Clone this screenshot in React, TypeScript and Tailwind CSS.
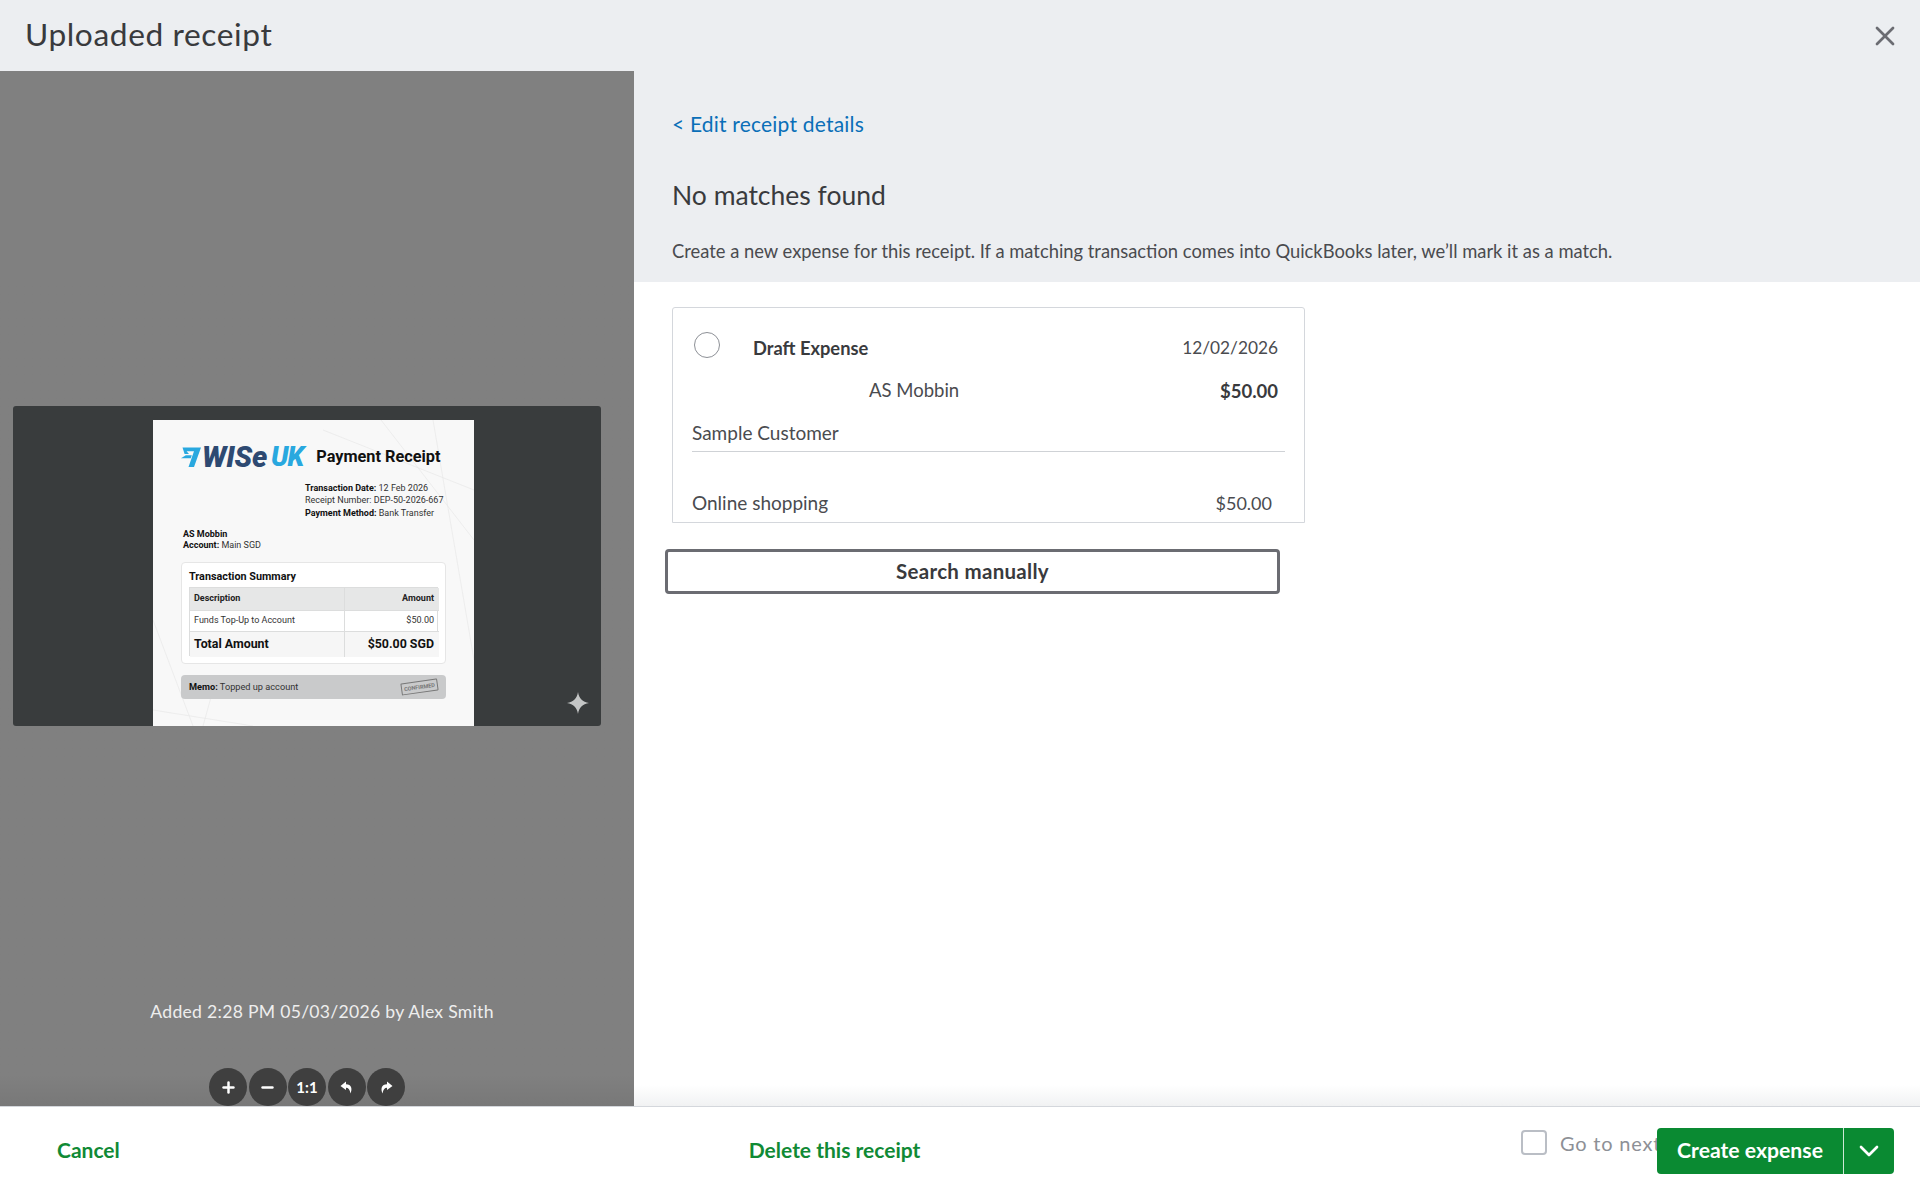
import { Plus, Minus, X, ChevronDown } from 'lucide-react';

const avenir = "font-['Lato','Noto_Sans',sans-serif]";

const ZoomBtn = ({ children }: { children: React.ReactNode }) => (
  <button className="flex h-[38px] w-[38px] shrink-0 items-center justify-center rounded-full bg-[#3f3f3f] text-white">
    {children}
  </button>
);

// filled curved arrow used by the rotate buttons
const TurnArrow = ({ flip }: { flip?: boolean }) => (
  <svg className={`h-[13px] w-[13px] ${flip ? '-scale-x-100' : ''}`} viewBox="0 0 13 13" fill="currentColor">
    <path d="M6 0.5L0.5 5L6 9V6.8C8.4 6.8 10 8.6 10.4 12.5C12.6 8 11.6 3.2 6 3.2Z" />
  </svg>
);

const PaperLines = () => (
  <svg className="absolute inset-0 h-full w-full" viewBox="0 0 321 306" fill="none" stroke="#e8e8e8" strokeWidth="0.7">
    <path d="M228 0L321 120M280 0L321 240M170 10L321 70" />
    <path d="M0 200L40 306M0 290L100 306M50 306L60 270" />
  </svg>
);

const Receipt = () => (
  <div className="relative ml-[13px] h-[306px] w-[321px] shrink-0 overflow-hidden bg-[#f8f8f8] font-['Roboto',sans-serif] text-[#1c1c1c]">
    <PaperLines />
    <div className="relative px-[28px] pt-[27px]">
      {/* Logo + title */}
      <div className="flex h-[20px] items-center">
        <svg className="h-[20px] w-[20px] shrink-0" viewBox="0 0 20 20" fill="#29a8df">
          <path d="M1.5 0.5H20L13 20H7.5L13 4.2H5.6L8 7H3.6Z" />
          <path d="M4.8 8.2H10.8L9.8 11.2H0Z" />
        </svg>
        <span className="ml-[1px] text-[29px] leading-[20px] font-black italic tracking-[-0.2px] text-[#2e4a72]">WISe</span>
        <span className="ml-[4px] text-[27px] leading-[20px] font-black italic tracking-[-1px] text-[#29a8df]">UK</span>
        <span className="ml-[13px] text-[16.3px] leading-[20px] font-bold text-[#111]">Payment Receipt</span>
      </div>
      <div className="mt-[15px] ml-[124px] text-[9px] leading-[12.4px] whitespace-nowrap text-[#333]">
        <p><b className="font-bold text-[#111]">Transaction Date:</b> 12 Feb 2026</p>
        <p>Receipt Number: DEP-50-2026-667</p>
        <p><b className="font-bold text-[#111]">Payment Method:</b> Bank Transfer</p>
      </div>
      <div className="mt-[10px] ml-[2px] text-[9px] leading-[11px] text-[#333]">
        <p className="font-bold text-[#111]">AS Mobbin</p>
        <p><b className="font-bold text-[#111]">Account:</b> Main SGD</p>
      </div>
      {/* Summary */}
      <div className="mt-[11px] h-[102px] w-[265px] rounded-[4px] border border-[#e6e6e6] bg-white px-[7px] pt-[7px]">
        <p className="text-[10.8px] leading-[14px] font-bold text-[#111]">Transaction Summary</p>
        <div className="mt-[3px] grid h-[69px] w-[249px] grid-cols-[155px_94px] grid-rows-[22px_21px_26px] border border-[#dcdddd] text-[9px]">
          <div className="flex items-center border-r border-[#dcdddd] bg-[#e6e7e7] px-[4px] font-bold text-[#222]">Description</div>
          <div className="flex items-center justify-end bg-[#e6e7e7] pr-[5px] font-bold text-[#222]">Amount</div>
          <div className="flex items-center border-t border-r border-[#dcdddd] px-[4px] text-[#333]">Funds Top-Up to Account</div>
          <div className="flex items-center justify-end border-t border-[#dcdddd] pr-[5px] text-[#333]">$50.00</div>
          <div className="flex items-center border-t border-r border-[#dcdddd] bg-[#f6f6f6] px-[4px] text-[12.4px] font-bold text-[#111]">Total Amount</div>
          <div className="flex items-center justify-end border-t border-[#dcdddd] bg-[#f6f6f6] pr-[5px] text-[12.4px] font-bold text-[#111]">$50.00 SGD</div>
        </div>
      </div>
      {/* Memo */}
      <div className="mt-[11px] flex h-[24px] w-[265px] items-center justify-between rounded-[4px] bg-[#c9cacb] px-[8px] text-[9.2px] text-[#333]">
        <p><b className="font-bold text-[#111]">Memo:</b> Topped up account</p>
        <span className="-rotate-[8deg] rounded-[1px] border border-[#777] px-[2px] text-[5.5px] leading-[10px] font-bold text-[#777]">CONFIRMED</span>
      </div>
    </div>
  </div>
);

export default function App() {
  return (
    <div className={`flex h-[1200px] w-[1920px] flex-col overflow-hidden bg-white text-[#393a3d] ${avenir}`}>
      {/* Header */}
      <header className="flex h-[71px] shrink-0 items-center justify-between bg-[#eceef1] pr-[19px] pl-[25px]">
        <h1 className="pb-[2px] text-[31.7px] tracking-[0.6px] text-[#393a3d]">Uploaded receipt</h1>
        <X className="h-[32px] w-[32px] text-[#6b6c72]" strokeWidth={2} />
      </header>

      <div className="flex min-h-0 flex-1">
        {/* Receipt viewer */}
        <aside className="flex w-[634px] shrink-0 flex-col items-center overflow-hidden bg-[#808080] bg-gradient-to-b from-[#808080] from-[97%] to-[#787878]">
          <div className="relative mt-[335px] mr-[20px] flex h-[320px] w-[588px] shrink-0 items-end justify-center rounded-[3px] bg-[#393c3d]">
            <Receipt />
            <svg className="absolute right-[12px] bottom-[12px] h-[22px] w-[22px]" viewBox="0 0 24 24" fill="#c4c6c6">
              <path d="M12 0C13 7 17 11 24 12C17 13 13 17 12 24C11 17 7 13 0 12C7 11 11 7 12 0Z" />
            </svg>
          </div>
          <p className="mt-[274px] ml-[10px] text-[17.6px] leading-[24px] tracking-[0.28px] text-[#eeeeee]">
            Added 2:28 PM 05/03/2026 by Alex Smith
          </p>
          <div className="mt-[44px] mr-[20px] flex gap-[1.5px]">
            <ZoomBtn><Plus className="h-[17px] w-[17px]" strokeWidth={3.5} /></ZoomBtn>
            <ZoomBtn><Minus className="h-[17px] w-[17px]" strokeWidth={3.5} /></ZoomBtn>
            <ZoomBtn><span className="text-[15px] font-bold">1:1</span></ZoomBtn>
            <ZoomBtn><TurnArrow /></ZoomBtn>
            <ZoomBtn><TurnArrow flip /></ZoomBtn>
          </div>
        </aside>

        {/* Right side */}
        <main className="flex min-w-0 flex-1 flex-col bg-white">
          <section className="h-[211px] shrink-0 bg-[#eceef1] pt-[40px] pl-[38px]">
            <a className="block text-[21px] leading-[26px] tracking-[0.2px] text-[#0a6fb8]">&lt; Edit receipt details</a>
            <h2 className="mt-[41px] text-[26.5px] leading-[34px] text-[#393a3d]">No matches found</h2>
            <p className="mt-[27px] text-[18.36px] leading-[24px] text-[#4a4b4f]">
              Create a new expense for this receipt. If a matching transaction comes into QuickBooks later, we’ll mark it as a match.
            </p>
          </section>

          <div className="flex-1 pt-[25px] pl-[38px]">
            {/* Draft card */}
            <div className="h-[216px] w-[633px] rounded-t-[3px] border border-[#d4d7dc] px-[19px] pt-[24px] text-[18px] leading-[24px]">
              <div className="flex items-start justify-between pr-[7px]">
                <div className="flex items-start">
                  <span className="ml-[2px] h-[26px] w-[26px] rounded-full border border-[#8d9096] bg-white" />
                  <span className="ml-[33px] pt-[4px] text-[18.3px] font-bold text-[#393a3d]">Draft Expense</span>
                </div>
                <span className="pt-[4px] text-[17.3px] text-[#4a4b4f]">12/02/2026</span>
              </div>
              <div className="mt-[18px] flex justify-between pr-[7px] pl-[177px] text-[#4a4b4f]">
                <span className="text-[18.5px]">AS Mobbin</span>
                <span className="pt-[1px] text-[18.5px] font-bold text-[#393a3d]">$50.00</span>
              </div>
              <div className="mt-[18px] border-b border-[#cfd2d6] pb-[6px] text-[19px] text-[#4a4b4f]">Sample Customer</div>
              <div className="mt-[39px] flex justify-between pr-[13px] text-[#4a4b4f]">
                <span className="text-[19px]">Online shopping</span>
                <span>$50.00</span>
              </div>
            </div>
            <button className="mt-[26px] ml-[-7px] h-[45px] w-[615px] rounded-[4px] border-[3px] border-[#6b6c72] bg-white text-[20.5px] font-bold tracking-[0.3px] text-[#393a3d]">
              Search manually
            </button>
          </div>
          <div className="h-[21px] shrink-0 bg-gradient-to-b from-white to-[#f1f2f3]" />
        </main>
      </div>

      {/* Footer */}
      <footer className="flex h-[94px] shrink-0 items-start border-t border-[#d4d7dc] bg-white">
        <a className="mt-[30px] ml-[57px] text-[21px] leading-[26px] font-bold text-[#108a35]">Cancel</a>
        <a className="mt-[30px] ml-[629px] text-[21px] leading-[26px] font-bold text-[#108a35]">Delete this receipt</a>
        <div className="ml-auto flex">
          <div className="mt-[23px] flex w-[136px] items-start overflow-hidden">
            <span className="h-[25px] w-[26px] shrink-0 rounded-[4px] border-2 border-[#babec5] bg-white" />
            <span className="ml-[13px] text-[20px] leading-[26px] tracking-[0.8px] whitespace-nowrap text-[#8d9096]">Go to next</span>
          </div>
          <div className="mt-[21px] mr-[26px] flex h-[46px] w-[237px] overflow-hidden rounded-[4px] bg-[#0a8a32] text-white">
            <button className="flex-1 text-[21.2px] font-bold">Create expense</button>
            <span className="w-[1px] bg-white/80" />
            <button className="flex w-[50px] items-center justify-center"><ChevronDown className="h-[32px] w-[32px]" strokeWidth={2} /></button>
          </div>
        </div>
      </footer>
    </div>
  );
}
